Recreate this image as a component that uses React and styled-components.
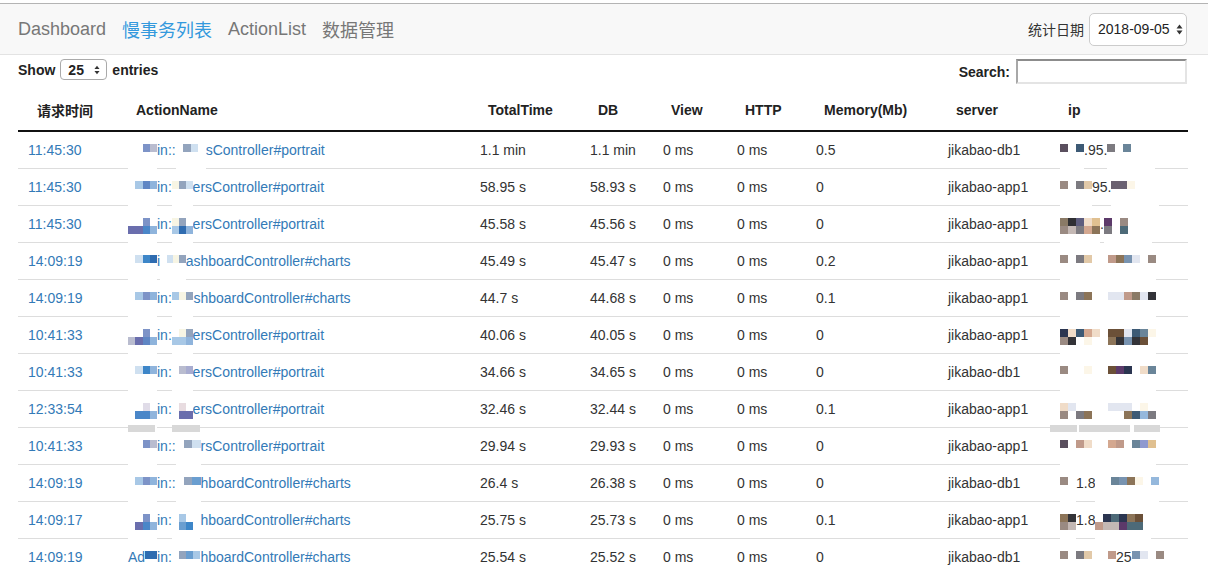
import React from "react";
import styled, { createGlobalStyle } from "styled-components";

const GlobalStyle = createGlobalStyle`
  html, body { margin: 0; padding: 0; background: #fff; }
  body {
    font-family: "Liberation Sans", "Noto Sans CJK SC", Arial, sans-serif;
    font-size: 14px;
    color: #333;
  }
`;

const LINK = "#337ab7";
const CJK = `"Noto Sans CJK SC", "Liberation Sans", sans-serif`;

const PAL = {
  w: "#ffffff", ".": "transparent",
  a: "#7d93c7", b: "#b9bccf", c: "#5f86c4", d: "#8fb4dc", e: "#3d86c8",
  f: "#2f6cb0", g: "#a8c8e6", h: "#cfe0f0", i: "#93a4bd", j: "#f7f5e4",
  k: "#6a6ead", l: "#4a86c8", m: "#a8acd0", o: "#e0dce8", p: "#e8dce0",
  q: "#6a9ed0",
  A: "#5a4f5e", B: "#3d5a75", C: "#6a8599", D: "#9a8a82", E: "#7c7a80",
  F: "#e2c9a8", G: "#6b6170", H: "#fcf6e8", I: "#8a7a66", J: "#2f2f33",
  K: "#5e5d7e", L: "#f0dcc8", M: "#5c3a6a", N: "#4d6a78", O: "#c4b8b4",
  P: "#d4a890", Q: "#c09a8a", R: "#7893b0", S: "#e2e6f0", T: "#2b3550",
  U: "#6b5038", V: "#8c7458", W: "#333338", X: "#8f99cf", Y: "#e0c090",
  Z: "#95b8dc",
};

const Page = styled.div`
  padding-top: 3px;
`;

const NavBar = styled.nav`
  display: flex;
  align-items: center;
  justify-content: space-between;
  height: 50px;
  padding: 0 21px 0 18px;
  background: #f8f8f8;
  border-top: 1px solid #b4b4b4;
  border-bottom: 1px solid #e3e3e3;
`;

const NavLinks = styled.div`
  display: flex;
  align-items: center;
  gap: 16px;
`;

const NavLink = styled.a`
  display: block;
  font-family: ${(p) => (p.$cjk ? CJK : `"Liberation Sans", sans-serif`)};
  font-size: 18px;
  line-height: 22px;
  color: ${(p) => (p.$active ? "#3399dd" : "#777")};
  text-decoration: none;
`;

const DateBox = styled.div`
  display: flex;
  align-items: center;
  gap: 5px;
`;

const DateLabel = styled.span`
  font-family: ${CJK};
  font-size: 14px;
  line-height: 20px;
  color: #333;
`;

const FakeSelect = styled.div`
  box-sizing: border-box;
  display: flex;
  align-items: center;
  justify-content: space-between;
  width: ${(p) => p.$w}px;
  height: ${(p) => p.$h}px;
  padding: 0 ${(p) => (p.$small ? 6 : 3)}px 0 ${(p) => (p.$small ? 7 : 8)}px;
  background: #fff;
  border: 1px solid ${(p) => (p.$small ? "#aaa" : "#ccc")};
  border-radius: ${(p) => (p.$small ? 4 : 5)}px;
  font-size: 14px;
  font-weight: ${(p) => (p.$small ? "bold" : "normal")};
  color: #222;
`;

const Controls = styled.div`
  display: flex;
  justify-content: space-between;
  align-items: flex-start;
  padding: 4px 21px 0 18px;
  margin-bottom: 6px;
`;

const ControlGroup = styled.div`
  display: flex;
  align-items: center;
  gap: ${(p) => p.$gap}px;
  font-weight: bold;
  font-size: 14px;
  color: #222;
`;

const SearchInput = styled.div`
  box-sizing: border-box;
  width: 171px;
  height: 25px;
  background: #fff;
  border: 2px solid #e4e4e4;
  border-top-color: #8c8c8c;
  border-left-color: #a8a8a8;
`;

const TableWrap = styled.div`
  padding: 0 20px 0 18px;
`;

const Table = styled.table`
  width: 1170px;
  table-layout: fixed;
  border-collapse: separate;
  border-spacing: 0;
`;

const Th = styled.th`
  text-align: left;
  font-family: ${(p) => (p.$cjk ? CJK : `"Liberation Sans", sans-serif`)};
  font-weight: bold;
  font-size: 14px;
  line-height: 20px;
  padding: 10px 10px 10px ${(p) => p.$pad || 18}px;
  border-bottom: 2px solid #111;
  color: #222;
  white-space: nowrap;
`;

const Td = styled.td`
  position: relative;
  padding: 8px 10px;
  line-height: 20px;
  font-size: 14px;
  border-bottom: 1px solid #ddd;
  color: ${(p) => (p.$link ? LINK : "#333")};
  white-space: nowrap;
  overflow: visible;
`;

const MosaicBox = styled.span`
  position: relative;
  display: inline-block;
  vertical-align: -5px;
  width: ${(p) => p.$w}px;
  height: 16px;
  &::before {
    content: "";
    position: absolute;
    left: 0;
    right: 0;
    top: -11px;
    bottom: -11px;
    background: #fff;
  }
`;

const TileRow = styled.span`
  position: relative;
  display: flex;
  height: 8px;
`;

const Tile = styled.span`
  flex: 1;
  height: 8px;
  background: ${(p) => p.$c};
`;

const Smear = styled.span`
  position: absolute;
  z-index: 2;
  top: -3px;
  height: 7px;
  background: #d8d8d8;
`;

const Arrows = ({ w = 7, h = 11 }) => (
  <svg width={w} height={h} viewBox="0 0 7 11">
    <path d="M0.5 4.4 L3.5 0.6 L6.5 4.4 Z M0.5 6.6 L3.5 10.4 L6.5 6.6 Z" fill="#333" />
  </svg>
);

const Mosaic = ({ w, t, b }) => {
  const top = t.split("");
  const bottom = (b || "w".repeat(t.length)).split("");
  return (
    <MosaicBox $w={w || t.length * 8}>
      <TileRow>{top.map((c, i) => <Tile key={i} $c={PAL[c]} />)}</TileRow>
      <TileRow>{bottom.map((c, i) => <Tile key={i} $c={PAL[c]} />)}</TileRow>
    </MosaicBox>
  );
};

const Masked = ({ parts }) =>
  parts.map((p, i) => (typeof p === "string" ? <span key={i}>{p}</span> : <Mosaic key={i} {...p} />));

const rows = [
  { time: "11:45:30", name: [{ w: 29, t: "wwab" }, "in::", { w: 30, t: "wihw" }, "sController#portrait"], total: "1.1 min", db: "1.1 min", mem: "0.5", server: "jikabao-db1", ip: [{ t: "AwB" }, ".95.", { t: "EwCwww" }] },
  { time: "11:45:30", name: [{ w: 29, t: "wgcd" }, "in:", { w: 20.8, t: "jih" }, "ersController#portrait"], total: "58.95 s", db: "58.93 s", mem: "0", server: "jikabao-app1", ip: [{ t: "DwEF" }, "95.", { t: "GGHwww" }] },
  { time: "11:45:30", name: [{ w: 29, t: "wwaw", b: "kkld" }, "in:", { w: 20.8, t: "jiw", b: "gfd" }, "ersController#portrait"], total: "45.58 s", db: "45.56 s", mem: "0", server: "jikabao-app1", ip: [{ t: "IJKLY", b: "DOEPV" }, ".", { t: "MwDwww", b: "EwNwww" }] },
  { time: "14:09:19", name: [{ w: 29, t: "whef" }, "i", { w: 25.5, t: "whji" }, "ashboardController#charts"], total: "45.49 s", db: "45.47 s", mem: "0.2", server: "jikabao-app1", ip: [{ t: "DwEFwwQVRSwD" }] },
  { time: "14:09:19", name: [{ w: 29, t: "wgad" }, "in:", { w: 21.6, t: "gji" }, "shboardController#charts"], total: "44.7 s", db: "44.68 s", mem: "0.1", server: "jikabao-app1", ip: [{ t: "DwEVwwSSQISW" }] },
  { time: "10:41:33", name: [{ w: 29, t: "wwaw", b: "bkcd" }, "in:", { w: 20.8, t: "wji", b: "ggd" }, "ersController#portrait"], total: "40.06 s", db: "40.05 s", mem: "0", server: "jikabao-app1", ip: [{ t: "TLBPLwUUSBCH", b: "DWwHwwVWRWUw" }] },
  { time: "10:41:33", name: [{ w: 29, t: "whed" }, "in:", { w: 20.8, t: "wbm" }, "ersController#portrait"], total: "34.66 s", db: "34.65 s", mem: "0", server: "jikabao-db1", ip: [{ t: "DwwHwwUMTwLC" }] },
  { time: "12:33:54", name: [{ w: 29, t: "wwow", b: "wlld" }, "in:", { w: 20.8, t: "wpw", b: "wkk" }, "ersController#portrait"], total: "32.46 s", db: "32.44 s", mem: "0.1", server: "jikabao-app1", ip: [{ t: "LSwwwwSSSwHw", b: "DwEVwwwwVBZE" }] },
  { time: "10:41:33", name: [{ w: 29, t: "wwab" }, "in::", { w: 24.9, t: "wih" }, "rsController#portrait"], total: "29.94 s", db: "29.93 s", mem: "0", server: "jikabao-app1", ip: [{ t: "AwQLwwPQwCXY" }], smear: true },
  { time: "14:09:19", name: [{ w: 29, t: "wgad" }, "in::", { w: 24.9, t: "wiq" }, "hboardController#charts"], total: "26.4 s", db: "26.38 s", mem: "0", server: "jikabao-db1", ip: [{ t: "Dw" }, "1.8", { t: "wwCRVHwZ" }] },
  { time: "14:09:17", name: [{ w: 29, t: "wwaw", b: "wkld" }, "in:", { w: 28.6, t: "wgww", b: "wqew" }, "hboardController#charts"], total: "25.75 s", db: "25.73 s", mem: "0.1", server: "jikabao-app1", ip: [{ t: "VW", b: "DO" }, "1.8", { t: "wTNTVUw", b: "QOOMNNw" }] },
  { time: "14:09:19", name: ["Ad", { w: 11.9, t: "ff" }, "in:", { w: 28.6, t: "wiqg" }, "hboardController#charts"], total: "25.54 s", db: "25.52 s", mem: "0", server: "jikabao-db1", ip: [{ t: "DwEFwwQ" }, "25", { t: "RSwD" }] },
];

const columns = [
  { label: "请求时间", w: 100, pad: 19, cjk: true },
  { label: "ActionName", w: 352 },
  { label: "TotalTime", w: 110 },
  { label: "DB", w: 73 },
  { label: "View", w: 74 },
  { label: "HTTP", w: 79 },
  { label: "Memory(Mb)", w: 132 },
  { label: "server", w: 112 },
  { label: "ip", w: 138 },
];

export default function App() {
  return (
    <Page>
      <GlobalStyle />
      <NavBar>
        <NavLinks>
          <NavLink>Dashboard</NavLink>
          <NavLink $cjk $active>慢事务列表</NavLink>
          <NavLink>ActionList</NavLink>
          <NavLink $cjk>数据管理</NavLink>
        </NavLinks>
        <DateBox>
          <DateLabel>统计日期</DateLabel>
          <FakeSelect $w={98} $h={33}>
            2018-09-05
            <Arrows />
          </FakeSelect>
        </DateBox>
      </NavBar>

      <Controls>
        <ControlGroup $gap={5}>
          Show
          <FakeSelect $small $w={47} $h={21}>
            25
            <Arrows w={6} h={10} />
          </FakeSelect>
          entries
        </ControlGroup>
        <ControlGroup $gap={6}>
          Search:
          <SearchInput />
        </ControlGroup>
      </Controls>

      <TableWrap>
        <Table>
          <colgroup>
            {columns.map((c) => <col key={c.label} style={{ width: c.w }} />)}
          </colgroup>
          <thead>
            <tr>
              {columns.map((c) => <Th key={c.label} $pad={c.pad} $cjk={c.cjk}>{c.label}</Th>)}
            </tr>
          </thead>
          <tbody>
            {rows.map((r, i) => (
              <tr key={i}>
                <Td $link>{r.time}</Td>
                <Td $link>
                  {r.smear && <><Smear style={{ left: 10, width: 27 }} /><Smear style={{ left: 54, width: 28 }} /></>}
                  <Masked parts={r.name} />
                </Td>
                <Td>{r.total}</Td>
                <Td>{r.db}</Td>
                <Td>0 ms</Td>
                <Td>0 ms</Td>
                <Td>{r.mem}</Td>
                <Td>{r.server}</Td>
                <Td>
                  {r.smear && <><Smear style={{ left: 0, width: 27 }} /><Smear style={{ left: 29, width: 51 }} /><Smear style={{ left: 84, width: 26 }} /></>}
                  <Masked parts={r.ip} />
                </Td>
              </tr>
            ))}
          </tbody>
        </Table>
      </TableWrap>
    </Page>
  );
}
